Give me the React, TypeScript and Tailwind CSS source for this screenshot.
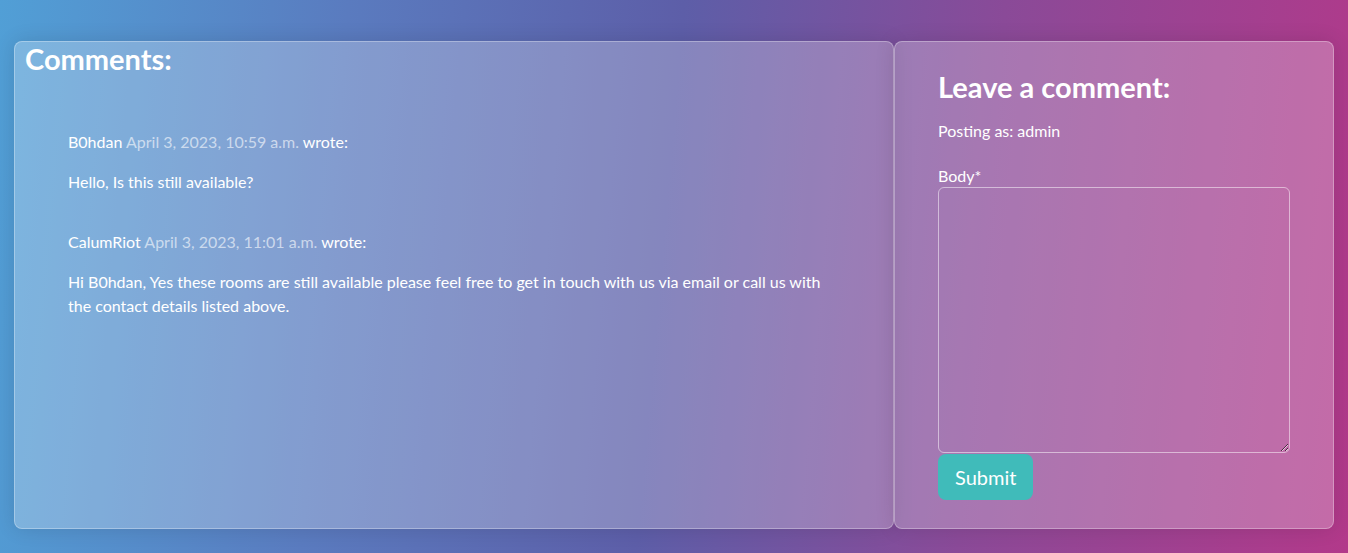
const comments = [
  {
    name: "B0hdan",
    date: "April 3, 2023, 10:59 a.m.",
    body: "Hello, Is this still available?",
  },
  {
    name: "CalumRiot",
    date: "April 3, 2023, 11:01 a.m.",
    body: "Hi B0hdan, Yes these rooms are still available please feel free to get in touch with us via email or call us with the contact details listed above.",
  },
];

export default function App() {
  return (
    <div className="min-h-[553px] w-full bg-[linear-gradient(95deg,#519fd6_0%,#5a7bbf_25%,#5d5ea8_49%,#8a4a98_72%,#b2398a_100%)] px-[14px] pt-[41px] pb-[25px] font-['Lato','Noto_Sans',sans-serif] text-white">
      <div className="flex">
        {/* Comments */}
        <div className="w-[880px] h-[488px] rounded-lg border border-white/30 bg-white/25 shadow-[0_0_20px_rgba(0,0,0,0.12)]">
          <h3 className="px-[10px] text-[29px] font-bold leading-[1.2]">Comments:</h3>
          <div className="pl-[53px] pr-[60px] pt-[53px]">
            {comments.map((c) => (
              <div key={c.date} className="mb-[36px] text-base leading-6">
                <p className="mb-4">
                  {c.name} <span className="text-white/60">{c.date}</span> wrote:
                </p>
                <p className="max-w-[770px]">{c.body}</p>
              </div>
            ))}
          </div>
        </div>
        {/* Leave a comment */}
        <div className="w-[440px] h-[488px] rounded-lg border border-white/30 bg-white/25 px-[43px] pt-[28px] shadow-[0_0_20px_rgba(0,0,0,0.12)]">
          <h3 className="text-[29px] font-bold leading-[1.2]">Leave a comment:</h3>
          <p className="mt-[14px] text-base leading-6">Posting as: admin</p>
          <label className="mt-[21px] block text-base leading-[23px]">Body*</label>
          <textarea className="block h-[266px] w-full resize-y rounded-md border border-white/50 bg-transparent" />
          <button className="mt-px rounded-lg bg-[#40bbba] px-[17px] py-[9px] text-xl leading-7 text-white">
            Submit
          </button>
        </div>
      </div>
    </div>
  );
}
